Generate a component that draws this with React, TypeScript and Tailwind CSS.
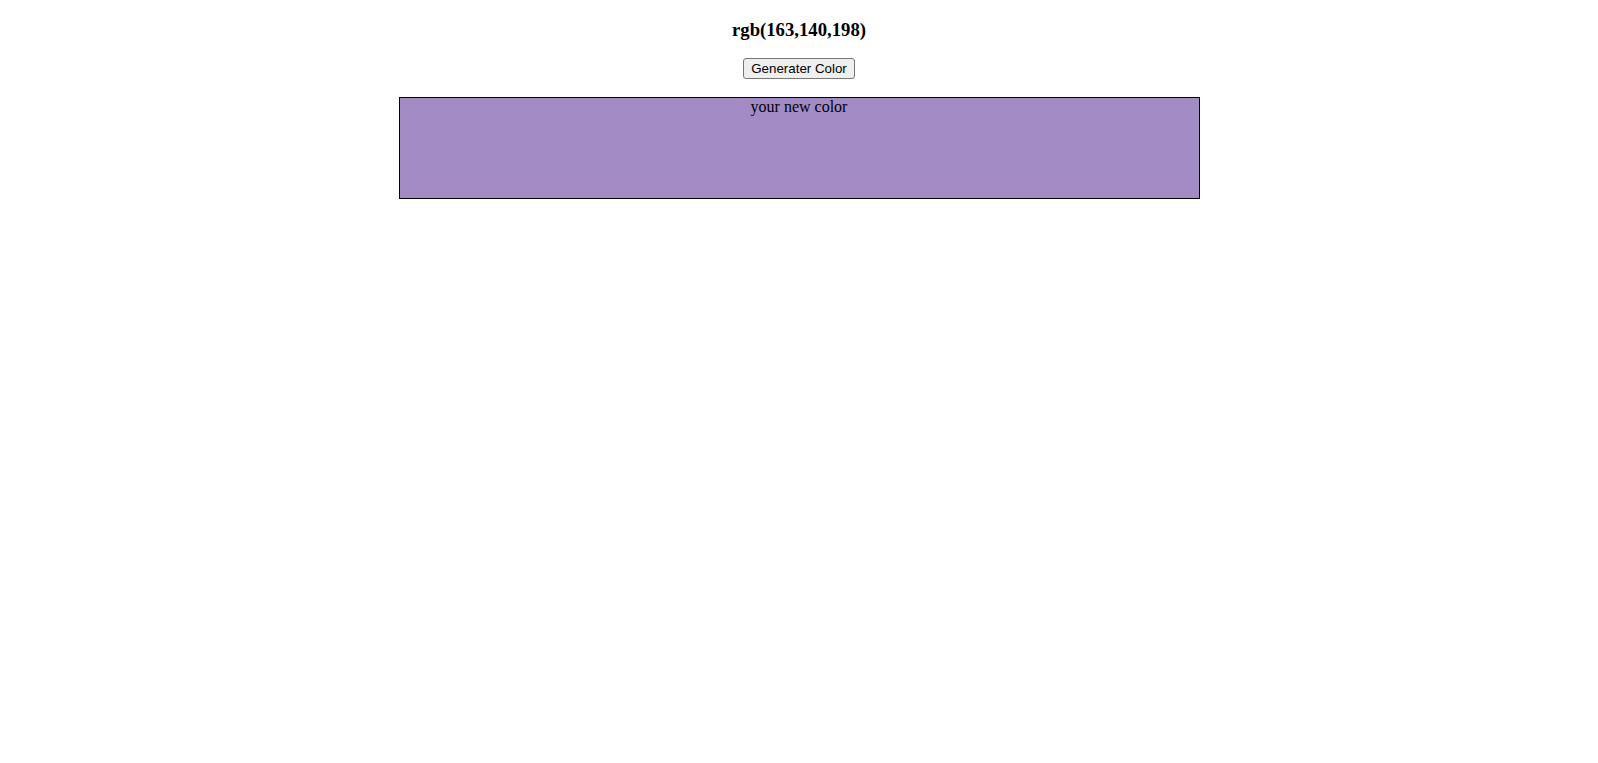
import { useState } from 'react';

export default function App() {
  const [rgb, setRgb] = useState<[number, number, number]>([163, 140, 198]);

  const generate = () => {
    setRgb([
      Math.floor(Math.random() * 256),
      Math.floor(Math.random() * 256),
      Math.floor(Math.random() * 256),
    ]);
  };

  const color = `rgb(${rgb[0]},${rgb[1]},${rgb[2]})`;

  return (
    <div className="min-h-screen bg-white text-black font-['Liberation_Serif',serif] text-center">
      {/* Heading */}
      <h3 className="pt-[19px] text-[18.72px] leading-[21px] font-bold">{color}</h3>

      {/* Button */}
      <div className="mt-[18px] flex justify-center">
        <button
          onClick={generate}
          className="h-[21px] px-[7px] bg-[#efefef] border border-[#767676] rounded-[3px] text-[13.333px] leading-[17px] font-['Liberation_Sans',Arial,sans-serif] hover:bg-[#e5e5e5]"
        >
          Generater Color
        </button>
      </div>

      {/* Color box */}
      <div
        className="mx-auto mt-[18px] w-1/2 h-[100px] border border-black box-content text-base leading-[18px]"
        style={{ backgroundColor: color }}
      >
        your new color
      </div>
    </div>
  );
}
